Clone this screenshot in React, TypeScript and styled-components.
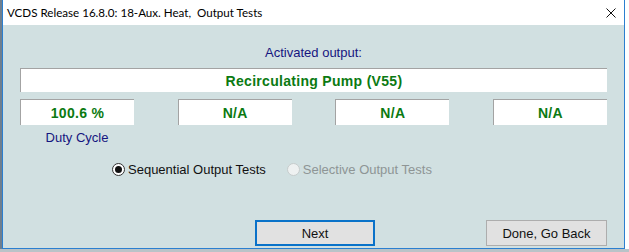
import React from "react";
import styled, { createGlobalStyle } from "styled-components";

const Global = createGlobalStyle`
  html, body { margin: 0; padding: 0; background: #ffffff; }
  body { font-family: "Liberation Sans", Arial, sans-serif; }
`;

const Screen = styled.div`
  width: 629px;
  height: 252px;
  display: flex;
  flex-direction: column;
  background: #ffffff;
  overflow: hidden;
`;

const Row = styled.div`
  display: flex;
  height: 249px;
`;

const LeftStrip = styled.div`
  width: 2px;
  background: #6f7f8f;
`;

const BottomStrip = styled.div`
  height: 3px;
  background: #b9c3c8;
`;

const Window = styled.div`
  width: 621px;
  display: flex;
  flex-direction: column;
  border-left: 1px solid #2b7fd0;
  border-right: 1px solid #2b7fd0;
  border-bottom: 1px solid #2b7fd0;
`;

const TitleBar = styled.div`
  height: 25px;
  background: #ffffff;
  display: flex;
  align-items: center;
  justify-content: space-between;
  padding: 0 8px 0 4px;
  font-family: Lato, "Noto Sans", "Segoe UI", sans-serif;
  font-size: 11.6px;
  color: #000;
`;

const CloseIcon = styled.svg`
  width: 10px;
  height: 10px;
`;

const Body = styled.div`
  flex: 1;
  background: #d1e0e1;
  display: flex;
  flex-direction: column;
  padding: 0 17px;
`;

const Caption = styled.div<{ $top?: number }>`
  font-size: 13px;
  line-height: 15px;
  color: #15157f;
  text-align: center;
  margin-top: ${(p) => p.$top ?? 0}px;
`;

const Field = styled.div<{ $h: number }>`
  height: ${(p) => p.$h}px;
  box-sizing: border-box;
  background: #ffffff;
  border-top: 1px solid #a3a3a3;
  border-left: 1px solid #a3a3a3;
  display: flex;
  align-items: center;
  justify-content: center;
  font-weight: bold;
  font-size: 14px;
  color: #0b7a12;
  letter-spacing: 0.3px;
`;

const BigField = styled(Field)`
  margin-top: 8px;
  padding-top: 1px;
`;

const Grid = styled.div`
  margin-top: 7px;
  display: grid;
  grid-template-columns: 114px 114px 114px 114px;
  justify-content: space-between;
  row-gap: 5px;
`;

const RadioRow = styled.div`
  margin-top: 16px;
  padding-left: 92px;
  height: 16px;
  display: flex;
  align-items: center;
`;

const RadioItem = styled.div<{ $disabled?: boolean }>`
  display: flex;
  align-items: center;
  font-size: 13px;
  color: ${(p) => (p.$disabled ? "#8e9595" : "#111")};
  margin-right: 21px;
`;

const Circle = styled.span<{ $disabled?: boolean }>`
  width: 13px;
  height: 13px;
  box-sizing: border-box;
  border-radius: 50%;
  border: 1px solid ${(p) => (p.$disabled ? "#c6cccc" : "#333")};
  background: ${(p) => (p.$disabled ? "#eef1f1" : "#fff")};
  display: flex;
  align-items: center;
  justify-content: center;
  margin-right: 3px;
`;

const Dot = styled.span`
  width: 7px;
  height: 7px;
  border-radius: 50%;
  background: #111;
`;

const ButtonRow = styled.div`
  margin-top: 43px;
  display: flex;
  justify-content: flex-end;
`;

const Button = styled.button<{ $primary?: boolean; $w: number }>`
  width: ${(p) => p.$w}px;
  height: 26px;
  box-sizing: border-box;
  background: #e1e1e1;
  border: ${(p) => (p.$primary ? "2px solid #0a72c9" : "1px solid #adadad")};
  font-family: "Liberation Sans", Arial, sans-serif;
  font-size: 13px;
  color: #111;
  padding: 0;
  margin-right: ${(p) => (p.$primary ? 111 : 0)}px;
`;

const RightStrip = styled.div`
  flex: 1;
  background: #ffffff;
`;

export default function App() {
  return (
    <>
      <Global />
      <Screen>
        <Row>
          <LeftStrip />
          <Window>
            <TitleBar>
              <span>VCDS Release 16.8.0: 18-Aux. Heat,&nbsp; Output Tests</span>
              <CloseIcon viewBox="0 0 10 10">
                <path d="M0.5 0.5 L9.5 9.5 M9.5 0.5 L0.5 9.5" stroke="#111" strokeWidth="1" />
              </CloseIcon>
            </TitleBar>
            <Body>
              <Caption $top={20}>Activated output:</Caption>
              <BigField $h={24}>Recirculating Pump (V55)</BigField>
              <Grid>
                <Field $h={26}>100.6 %</Field>
                <Field $h={26}>N/A</Field>
                <Field $h={26}>N/A</Field>
                <Field $h={26}>N/A</Field>
                <Caption>Duty Cycle</Caption>
              </Grid>
              <RadioRow>
                <RadioItem>
                  <Circle>
                    <Dot />
                  </Circle>
                  Sequential Output Tests
                </RadioItem>
                <RadioItem $disabled>
                  <Circle $disabled />
                  Selective Output Tests
                </RadioItem>
              </RadioRow>
              <ButtonRow>
                <Button $primary $w={120}>Next</Button>
                <Button $w={121}>Done, Go Back</Button>
              </ButtonRow>
            </Body>
          </Window>
          <RightStrip />
        </Row>
        <BottomStrip />
      </Screen>
    </>
  );
}
